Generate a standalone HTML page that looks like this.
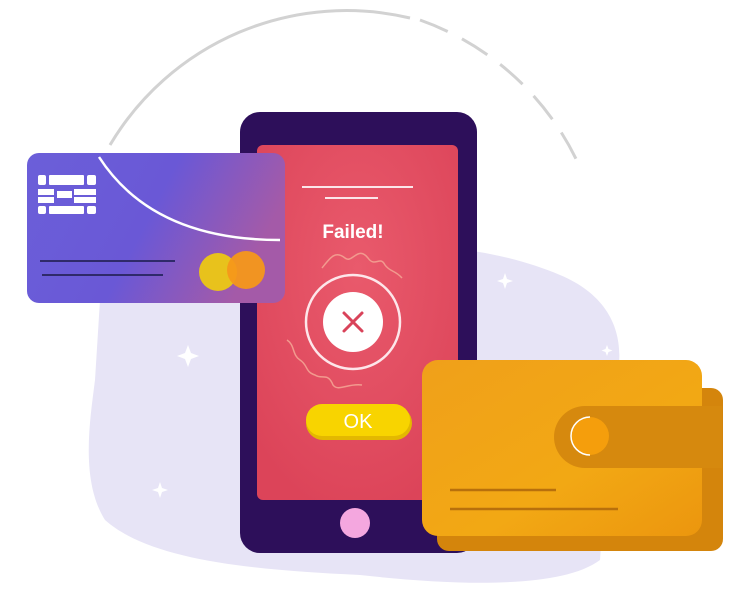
<!DOCTYPE html>
<html><head><style>html,body{margin:0;padding:0;background:#fff;width:746px;height:605px;overflow:hidden}</style></head>
<body>
<svg width="746" height="605" viewBox="0 0 746 605" xmlns="http://www.w3.org/2000/svg">
<defs>
<linearGradient id="cg" x1="0" y1="0" x2="1" y2="0.3"><stop offset="0" stop-color="#6b5fd9"/><stop offset="0.55" stop-color="#6a58d6"/><stop offset="1" stop-color="#a45aa8"/></linearGradient>
<radialGradient id="sg" cx="0.5" cy="0.35" r="0.7"><stop offset="0" stop-color="#e95a6c"/><stop offset="1" stop-color="#dc4459"/></radialGradient>
<linearGradient id="wg" x1="0" y1="0" x2="1" y2="1"><stop offset="0" stop-color="#f0a01a"/><stop offset="0.6" stop-color="#f2a814"/><stop offset="1" stop-color="#ec960e"/></linearGradient>
</defs>
<!-- blob -->
<path d="M100 300 C130 250 230 245 330 250 C430 240 500 250 560 275 C620 300 630 350 610 400 L600 560 C560 590 450 585 360 575 C250 570 150 560 105 520 C80 480 90 420 95 380 Z" fill="#e7e4f6"/>
<!-- arc -->
<path d="M110 145 A275 275 0 0 1 410 18" fill="none" stroke="#d2d2d2" stroke-width="3"/>
<path d="M420 20 A275 275 0 0 1 582 172" fill="none" stroke="#d2d2d2" stroke-width="3" stroke-dasharray="30 16"/>
<!-- phone -->
<rect x="240" y="112" width="237" height="441" rx="20" fill="#2d0f5a"/>
<rect x="257" y="145" width="201" height="355" rx="6" fill="url(#sg)"/>
<line x1="302" y1="187" x2="413" y2="187" stroke="#fbe6ea" stroke-width="2"/>
<line x1="325" y1="198" x2="378" y2="198" stroke="#fbe6ea" stroke-width="2"/>
<text x="353" y="238" text-anchor="middle" font-family="Liberation Sans, sans-serif" font-weight="bold" font-size="19" fill="#fff">Failed!</text>
<path d="M322 268 C330 258 335 250 345 258 C352 264 358 245 368 258 C375 268 380 255 385 265 C390 272 395 270 402 278" fill="none" stroke="#f29a8e" stroke-width="1.5"/>
<path d="M287 340 C295 345 292 355 300 360 C308 365 305 372 315 375 C322 380 328 372 333 385 C338 392 348 383 362 385" fill="none" stroke="#f29a8e" stroke-width="1.5"/>
<circle cx="353" cy="322" r="47" fill="none" stroke="#fde6ea" stroke-width="2.5"/>
<circle cx="353" cy="322" r="30" fill="#fff"/>
<path d="M344 313 L362 331 M362 313 L344 331" stroke="#d9435a" stroke-width="3" stroke-linecap="round"/>
<rect x="306" y="406" width="106" height="34" rx="17" fill="#e3b800"/>
<rect x="306" y="404" width="104" height="32" rx="16" fill="#f8d400"/>
<text x="358" y="428" text-anchor="middle" font-family="Liberation Sans, sans-serif" font-size="20" fill="#fff">OK</text>
<circle cx="355" cy="523" r="15" fill="#f4a7df"/>
<!-- card -->
<rect x="27" y="153" width="258" height="150" rx="12" fill="url(#cg)"/>
<g fill="#fff">
<rect x="38" y="175" width="8" height="10" rx="2"/><rect x="49" y="175" width="35" height="10" rx="1"/><rect x="87" y="175" width="9" height="10" rx="2"/>
<rect x="38" y="189" width="16" height="6"/><rect x="57" y="191" width="15" height="7"/><rect x="74" y="189" width="22" height="6"/>
<rect x="38" y="197" width="16" height="6"/><rect x="74" y="197" width="22" height="6"/>
<rect x="38" y="206" width="8" height="8" rx="2"/><rect x="49" y="206" width="35" height="8" rx="1"/><rect x="87" y="206" width="9" height="8" rx="2"/>
</g>
<path d="M99 157 C130 205 185 240 280 240" fill="none" stroke="#fff" stroke-width="2.5"/>
<line x1="40" y1="261" x2="175" y2="261" stroke="#2f2a6a" stroke-width="2"/>
<line x1="42" y1="275" x2="163" y2="275" stroke="#2f2a6a" stroke-width="2"/>
<circle cx="218" cy="272" r="19" fill="#e8c21c"/>
<circle cx="246" cy="270" r="19" fill="#f5981a" opacity="0.95"/>
<!-- wallet -->
<rect x="437" y="388" width="286" height="163" rx="12" fill="#d4850c"/>
<rect x="422" y="360" width="280" height="176" rx="16" fill="url(#wg)"/>
<path d="M585 406 L722 406 L722 468 L585 468 A31 31 0 0 1 585 406 Z" fill="#d6890e"/>
<circle cx="590" cy="436" r="19" fill="#f59e0c"/>
<path d="M590 417 A19 19 0 0 0 590 455" fill="none" stroke="#fff" stroke-width="1.5"/>
<line x1="450" y1="490" x2="556" y2="490" stroke="#b8700c" stroke-width="2.5"/>
<line x1="450" y1="509" x2="618" y2="509" stroke="#b8700c" stroke-width="2.5"/>
<!-- sparkles -->
<g fill="#fff">
<path d="M188 345 l3 8 8 3 -8 3 -3 8 -3 -8 -8 -3 8 -3z"/>
<path d="M160 482 l2 6 6 2 -6 2 -2 6 -2 -6 -6 -2 6 -2z"/>
<path d="M505 273 l2 6 6 2 -6 2 -2 6 -2 -6 -6 -2 6 -2z"/>
<path d="M607 345 l1.5 4 4 1.5 -4 1.5 -1.5 4 -1.5 -4 -4 -1.5 4 -1.5z"/>
</g>
</svg>
</body></html>
